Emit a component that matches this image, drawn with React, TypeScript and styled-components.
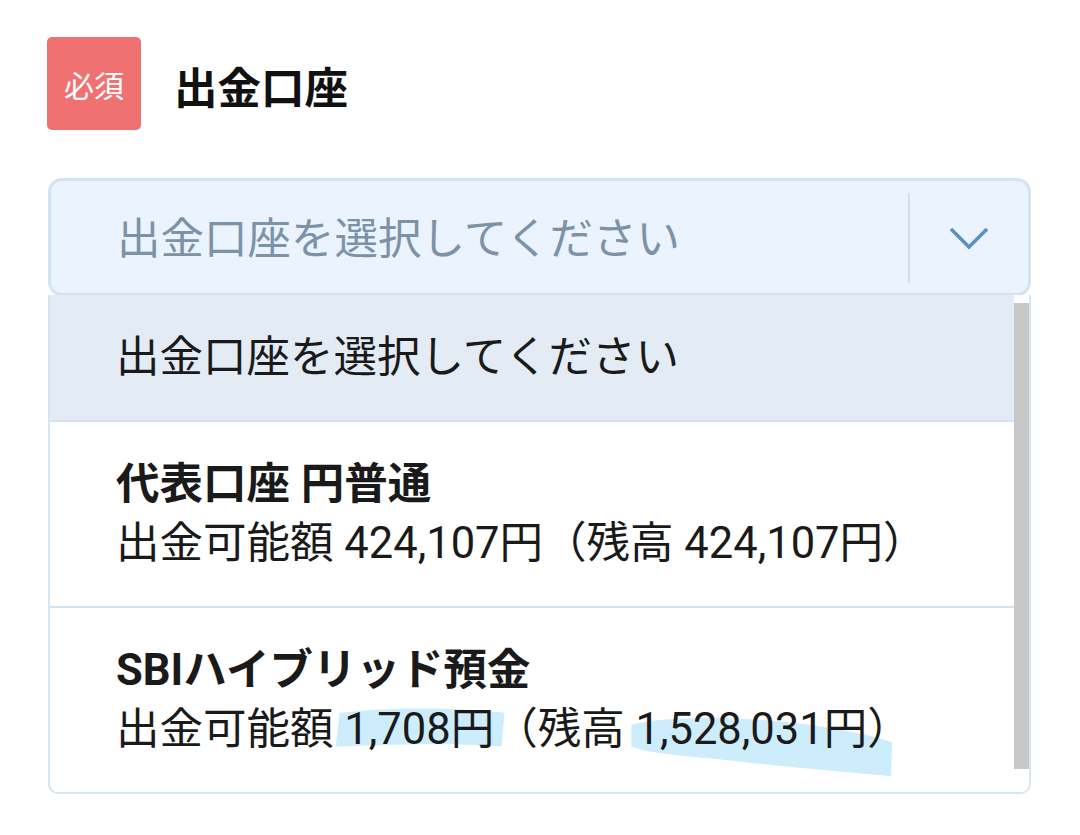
import React from "react";
import styled, { createGlobalStyle } from "styled-components";

const GlobalStyle = createGlobalStyle`
  body {
    margin: 0;
    background: #ffffff;
    font-family: Roboto, "Noto Sans CJK JP", "Noto Sans", sans-serif;
    color: #1b1b1b;
  }
`;

const Page = styled.div`
  padding: 37px 49px 0 47px;
`;

const Header = styled.div`
  display: flex;
  align-items: center;
  gap: 33px;
`;

const RequiredBadge = styled.span`
  display: flex;
  align-items: center;
  justify-content: center;
  width: 94px;
  height: 93px;
  border-radius: 5px;
  background: #ef7171;
  color: #ffffff;
  font-size: 30px;
`;

const Title = styled.h2`
  margin: 4px 0 0;
  font-size: 43.5px;
  font-weight: 700;
  color: #111111;
`;

const Field = styled.div`
  margin: 48px 0 0 1px;
  width: 983px;
`;

const SelectBox = styled.div`
  box-sizing: border-box;
  height: 118px;
  display: flex;
  align-items: center;
  border: 3px solid #d4e3f1;
  border-radius: 14px;
  background: #eaf3fe;
`;

const Placeholder = styled.span`
  flex: 1;
  padding: 0 0 4px 66px;
  font-size: 43.5px;
  color: #7c92a6;
`;

const Divider = styled.span`
  align-self: stretch;
  width: 2px;
  margin: 12px 0 10px;
  background: #cfe0f0;
`;

const ChevronCell = styled.span`
  width: 118px;
  display: flex;
  align-items: center;
  justify-content: center;
  padding-top: 2px;
`;

const List = styled.div`
  display: flex;
  border: 2px solid #d7e5f1;
  border-top: none;
  border-radius: 0 0 10px 10px;
  margin-top: -1px;
  overflow: hidden;
`;

const Items = styled.div`
  flex: 1;
  display: flex;
  flex-direction: column;
`;

const Item = styled.div<{ $active?: boolean }>`
  position: relative;
  padding: 33px 0 33px 66px;
  background: ${(p) => (p.$active ? "#e3ecf5" : "#ffffff")};
  & + & {
    border-top: 2px solid #d5e3ef;
  }
`;

const Line = styled.div<{ $bold?: boolean }>`
  position: relative;
  z-index: 1;
  font-size: 43.5px;
  line-height: 59px;
  font-weight: ${(p) => (p.$bold ? 700 : 400)};
  color: #1a1a1a;
  white-space: nowrap;
`;

const Highlight = styled.svg`
  position: absolute;
  inset: 0;
  width: 100%;
  height: 100%;
  z-index: 0;
`;

const ScrollTrack = styled.div`
  width: 15px;
  padding: 8px 0 23px;
  background: #ffffff;
  display: flex;
`;

const ScrollThumb = styled.div`
  flex: 1;
  background: #c8c8c8;
`;

export default function App() {
  return (
    <>
      <GlobalStyle />
      <Page>
        <Header>
          <RequiredBadge>必須</RequiredBadge>
          <Title>出金口座</Title>
        </Header>
        <Field>
          <SelectBox>
            <Placeholder>出金口座を選択してください</Placeholder>
            <Divider />
            <ChevronCell>
              <svg width="42" height="24" viewBox="0 0 42 24">
                <polyline
                  points="3,3 21,21 39,3"
                  fill="none"
                  stroke="#5a8fc3"
                  strokeWidth="3.5"
                />
              </svg>
            </ChevronCell>
          </SelectBox>
          <List>
            <Items>
              <Item $active>
                <Line>出金口座を選択してください</Line>
              </Item>
              <Item>
                <Line $bold>代表口座 円普通</Line>
                <Line>出金可能額 424,107円（残高 424,107円）</Line>
              </Item>
              <Item>
                <Highlight viewBox="0 0 965 186" preserveAspectRatio="none">
                  <path
                    d="M290 106 C340 100 400 100 455 106 L452 140 C400 136 340 138 286 140 Z"
                    fill="#cdedfc"
                  />
                  <path
                    d="M582 118 C620 108 700 110 760 118 C800 124 830 130 843 136 L842 170 C800 166 730 160 660 152 C620 148 596 146 582 140 Z"
                    fill="#cdedfc"
                  />
                </Highlight>
                <Line $bold>SBIハイブリッド預金</Line>
                <Line>出金可能額 1,708円（残高 1,528,031円）</Line>
              </Item>
            </Items>
            <ScrollTrack>
              <ScrollThumb />
            </ScrollTrack>
          </List>
        </Field>
      </Page>
    </>
  );
}
